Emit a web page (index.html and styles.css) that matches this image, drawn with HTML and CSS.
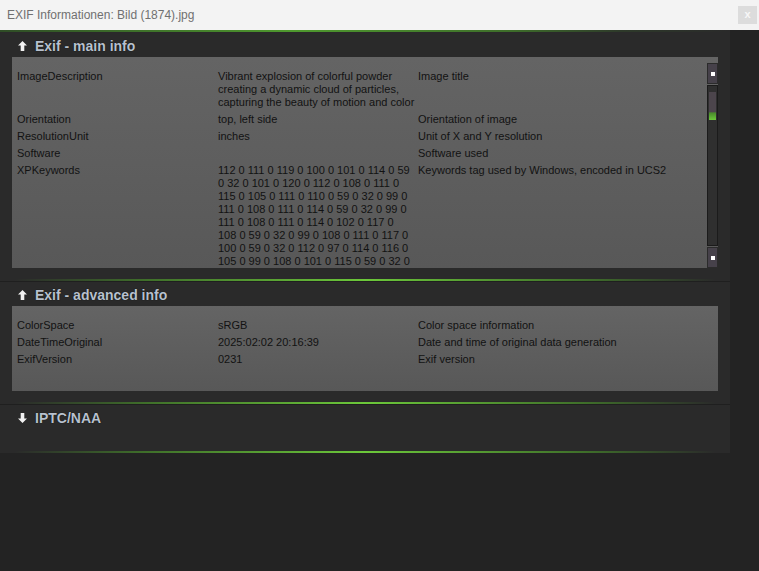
FILE: index.html
```html
<!DOCTYPE html>
<html lang="de">
<head>
    <meta charset="UTF-8">
    <title>EXIF Informationen</title>
    <link rel="stylesheet" href="styles.css">
</head>
<body>
    <div class="titlebar">
        <span class="title">EXIF Informationen: Bild (1874).jpg</span>
        <span class="close">x</span>
    </div>

    <div class="panel">
        <div class="sep top"></div>
        <h2 class="head">
            <svg class="arrow" viewBox="0 0 10 11"><polygon points="5,0 10,5 7,5 7,11 3,11 3,5 0,5"/></svg>
            Exif - main info
        </h2>
        <div class="box main">
            <div class="rows">
                <div class="row">
                    <div>ImageDescription</div>
                    <div>Vibrant explosion of colorful powder<br>creating a dynamic cloud of particles,<br>capturing the beauty of motion and color</div>
                    <div>Image title</div>
                </div>
                <div class="row">
                    <div>Orientation</div>
                    <div>top, left side</div>
                    <div>Orientation of image</div>
                </div>
                <div class="row">
                    <div>ResolutionUnit</div>
                    <div>inches</div>
                    <div>Unit of X and Y resolution</div>
                </div>
                <div class="row">
                    <div>Software</div>
                    <div></div>
                    <div>Software used</div>
                </div>
                <div class="row">
                    <div>XPKeywords</div>
                    <div>112 0 111 0 119 0 100 0 101 0 114 0 59<br>0 32 0 101 0 120 0 112 0 108 0 111 0<br>115 0 105 0 111 0 110 0 59 0 32 0 99 0<br>111 0 108 0 111 0 114 0 59 0 32 0 99 0<br>111 0 108 0 111 0 114 0 102 0 117 0<br>108 0 59 0 32 0 99 0 108 0 111 0 117 0<br>100 0 59 0 32 0 112 0 97 0 114 0 116 0<br>105 0 99 0 108 0 101 0 115 0 59 0 32 0</div>
                    <div>Keywords tag used by Windows, encoded in UCS2</div>
                </div>
            </div>
            <div class="scrollbar">
                <div class="sb-btn"><span></span></div>
                <div class="sb-track"><div class="sb-thumb"></div></div>
                <div class="sb-btn"><span></span></div>
            </div>
        </div>

        <div class="sep"></div>
        <h2 class="head">
            <svg class="arrow" viewBox="0 0 10 11"><polygon points="5,0 10,5 7,5 7,11 3,11 3,5 0,5"/></svg>
            Exif - advanced info
        </h2>
        <div class="box advanced">
            <div class="rows">
                <div class="row">
                    <div>ColorSpace</div>
                    <div>sRGB</div>
                    <div>Color space information</div>
                </div>
                <div class="row">
                    <div>DateTimeOriginal</div>
                    <div>2025:02:02 20:16:39</div>
                    <div>Date and time of original data generation</div>
                </div>
                <div class="row">
                    <div>ExifVersion</div>
                    <div>0231</div>
                    <div>Exif version</div>
                </div>
            </div>
        </div>

        <div class="sep"></div>
        <h2 class="head">
            <svg class="arrow" viewBox="0 0 10 11"><polygon points="5,11 10,6 7,6 7,0 3,0 3,6 0,6"/></svg>
            IPTC/NAA
        </h2>
        <div class="sep bottom"></div>
    </div>
</body>
</html>
```

FILE: styles.css
```css
body {
    margin: 0;
    width: 759px;
    height: 571px;
    background: #232323;
    font-family: "Liberation Sans", Arial, sans-serif;
    overflow: hidden;
}
.titlebar {
    height: 30px;
    background: #f3f3f3;
    display: flex;
    align-items: center;
    justify-content: space-between;
    padding: 0 2px 0 7px;
}
.title {
    font-family: "Liberation Sans", sans-serif;
    font-size: 12px;
    color: #707070;
}
.close {
    width: 19px;
    height: 18px;
    background: #dcdcdc;
    color: #f7f7f7;
    font-size: 11px;
    font-weight: bold;
    text-align: center;
    line-height: 17px;
}
.panel {
    width: 730px;
    background: #2a2a2a;
}
.sep {
    height: 2px;
    border-bottom: 1px solid #1f1f1f;
    background: linear-gradient(90deg, rgba(80,150,40,0) 2%, #3f6f2a 20%, #6cc83a 50%, #3f6f2a 80%, rgba(80,150,40,0) 98%);
    margin-top: 11px;
}
.sep.top {
    margin-top: 0;
    border-bottom-color: #2a2a2a;
    background: linear-gradient(90deg, #2f4d26 0%, #4f9a2e 40%, #3e6e2a 70%, #2e3a2a 85%, #2a2a2a 100%);
}
.sep.bottom {
    margin-top: 22px;
    border-bottom: none;
}
.head {
    margin: 0;
    height: 24px;
    padding-top: 2px;
    box-sizing: border-box;
    display: flex;
    align-items: center;
    gap: 8px;
    padding-left: 18px;
    font-size: 14px;
    font-weight: bold;
    color: #b8c1ce;
    text-shadow: 0 0 1px #000;
}
.arrow {
    width: 9px;
    height: 10px;
    fill: #f2f2f2;
}
.box {
    margin: 0 12px;
    background: linear-gradient(#646464, #585858);
    display: flex;
    font-size: 11px;
    color: #121212;
}
.box.main { height: 211px; }
.box.advanced { height: 85px; }
.rows {
    flex: 1;
    overflow: hidden;
    padding: 13px 0 0 5px;
}
.row {
    display: grid;
    grid-template-columns: 201px 200px 1fr;
    line-height: 13px;
    padding-bottom: 4px;
    white-space: nowrap;
}
.scrollbar {
    width: 11px;
    margin-top: 6px;
    display: flex;
    flex-direction: column;
    gap: 1px;
}
.sb-btn {
    height: 21px;
    background: #46414a;
    border: 1px solid #2b2b2b;
    box-sizing: border-box;
    display: flex;
    align-items: center;
    justify-content: center;
}
.sb-btn span {
    width: 4px;
    height: 4px;
    background: #ffffff;
}
.sb-track {
    flex: 1;
    background: #2f2f2f;
    border: 1px solid #1b1b1b;
    padding: 6px 1px 0;
}
.sb-thumb {
    height: 28px;
    background: linear-gradient(#4c454c 0, #4c454c 70%, #4a8a2c 75%, #6cc83a 100%);
}
```
